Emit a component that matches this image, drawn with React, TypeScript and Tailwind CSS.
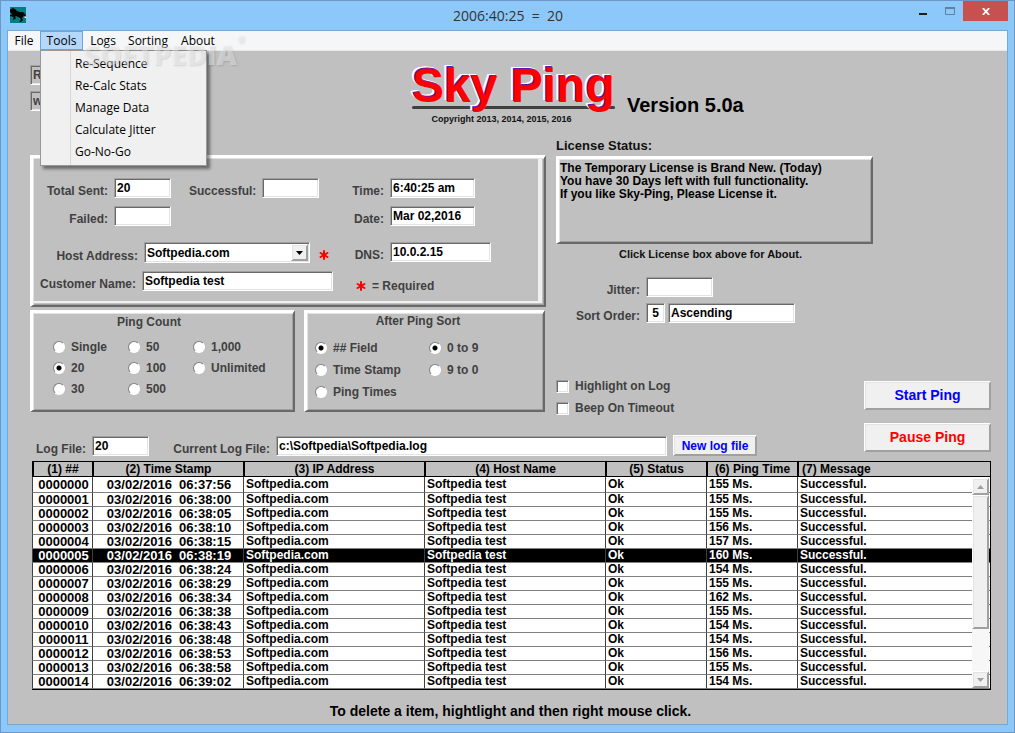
/**
 * Sky Ping main window
 *
 * Title bar, menu bar with the Tools menu open, ping settings and the ping log.
 */

import React from 'react'
import { Asterisk } from 'lucide-react'

interface LogEntry {
  id: string
  time: string
  ping: number
}

const TOOLS_MENU = ['Re-Sequence', 'Re-Calc Stats', 'Manage Data', 'Calculate Jitter', 'Go-No-Go']

const LOG: LogEntry[] = [
  { id: '0000000', time: '06:37:56', ping: 155 },
  { id: '0000001', time: '06:38:00', ping: 155 },
  { id: '0000002', time: '06:38:05', ping: 155 },
  { id: '0000003', time: '06:38:10', ping: 156 },
  { id: '0000004', time: '06:38:15', ping: 157 },
  { id: '0000005', time: '06:38:19', ping: 160 },
  { id: '0000006', time: '06:38:24', ping: 154 },
  { id: '0000007', time: '06:38:29', ping: 155 },
  { id: '0000008', time: '06:38:34', ping: 162 },
  { id: '0000009', time: '06:38:38', ping: 155 },
  { id: '0000010', time: '06:38:43', ping: 154 },
  { id: '0000011', time: '06:38:48', ping: 154 },
  { id: '0000012', time: '06:38:53', ping: 156 },
  { id: '0000013', time: '06:38:58', ping: 155 },
  { id: '0000014', time: '06:39:02', ping: 154 },
]

const SELECTED_ID = '0000005'

const SUNKEN =
  'border border-t-[#a0a0a0] border-l-[#a0a0a0] border-r-white border-b-white shadow-[inset_1px_1px_0_#696969,inset_-1px_-1px_0_#e3e3e3]'
const RAISED =
  'border border-t-white border-l-white border-r-[#a0a0a0] border-b-[#a0a0a0] shadow-[inset_1px_1px_0_#e3e3e3,inset_-1px_-1px_0_#a0a0a0] bg-[#f0f0f0]'
const PANEL =
  'border-t-[3px] border-l-[3px] border-r-2 border-b-2 border-t-white border-l-white border-r-[#696969] border-b-[#696969]'
const PANEL_EDGE = 'shadow-[inset_1px_1px_0_#e3e3e3,inset_-1px_-1px_0_#a0a0a0]'

interface FieldProps {
  id: string
  label: string
  value?: string
  labelClass?: string
  inputClass: string
}

const Field: React.FC<FieldProps> = ({ id, label, value = '', labelClass = '', inputClass }) => (
  <div className="flex items-end gap-1.5">
    <label htmlFor={id} className={`flex justify-end leading-[14px] whitespace-nowrap text-[#404040] ${labelClass}`}>
      {label}
    </label>
    <input id={id} defaultValue={value} className={`h-5 bg-white px-0.5 text-black ${SUNKEN} ${inputClass}`} />
  </div>
)

interface RadioProps {
  name: string
  label: string
  checked?: boolean
}

const Radio: React.FC<RadioProps> = ({ name, label, checked }) => (
  <label className="flex items-center gap-1.5 leading-4 text-[#404040]">
    <input
      type="radio"
      name={name}
      defaultChecked={checked}
      className="h-3 w-3 shrink-0 appearance-none rounded-full border border-t-[#808080] border-l-[#808080] border-r-white border-b-white bg-white checked:bg-[radial-gradient(circle,#000_2px,#fff_3px)]"
    />
    {label}
  </label>
)

const CheckBox: React.FC<{ label: string }> = ({ label }) => (
  <label className="flex h-3.5 items-center gap-1.5 text-[#404040]">
    <input type="checkbox" className={`h-[13px] w-[13px] appearance-none bg-white ${SUNKEN}`} />
    {label}
  </label>
)

const HorseIcon = () => (
  <svg viewBox="0 0 16 16" className="h-4 w-4">
    <rect width="16" height="16" fill="#008080" />
    <path
      d="M1 2l2-1 2 1 2 2 3 1 3 0 2 2 1 2-1 2-1-1-1-2 0 2-1 1 1 2-2 2-2 0 2-2-1-2-2-1-2-1-1 1 1 1-1 1-2 1 0-1 1-1-1-1-2-1-2 1 0 1-1-1 1-2 3 0-1-2-1-1-1 1-1-1z"
      fill="#000"
    />
    <path d="M14 10l1-1 1 1 0 1-1 0z" fill="#fff" />
  </svg>
)

const TitleBar = () => (
  <header className="flex h-[29px] items-start justify-between pr-[6px] pl-[9px]">
    <div className="w-[97px] pt-1.5">
      <HorseIcon />
    </div>
    <h1 className="pt-1 font-['Open_Sans',sans-serif] text-[14px] leading-[22px] font-normal whitespace-pre text-[#333]">
      2006:40:25{'  '}={'  '}20
    </h1>
    <div className="flex">
      <button aria-label="Minimize" className="flex h-[22px] w-7 items-center justify-center">
        <svg viewBox="0 0 8 6" className="h-1.5 w-2">
          <rect y="4" width="8" height="2" fill="#1e1e1e" />
        </svg>
      </button>
      <button aria-label="Maximize" className="flex h-5 w-[26px] items-center justify-center">
        <svg viewBox="0 0 10 8" className="h-2 w-2.5">
          <path d="M.5 1h9v6.500h-9z" fill="none" stroke="#5f819f" />
          <path d="M0 0h10v2H0z" fill="#5f819f" />
        </svg>
      </button>
      <button aria-label="Close" className="flex h-5 w-[45px] items-center justify-center bg-[#c75050]">
        <svg viewBox="0 0 8 7" className="h-[7px] w-2">
          <path d="M.8 0l6.400 7M7.200 0L.8 7" stroke="#fff" strokeWidth="1.800" />
        </svg>
      </button>
    </div>
  </header>
)

const MenuBar = () => (
  <nav className="relative flex h-5 border-b border-[#e8e8e8] bg-[#f5f6f7] font-['Open_Sans',sans-serif] text-[12px] leading-[18px] font-normal text-black">
    <button className="w-8">File</button>
    <div className="relative">
      <button className="h-[19px] w-[43px] border border-[#6aa5e0] bg-[#b5d7f9] leading-[17px]">Tools</button>
      <ul className="absolute top-[19px] left-0 z-10 w-[167px] border border-[#979797] bg-[#f0f0f0] bg-[linear-gradient(90deg,transparent_29px,#d7d7d7_29px,#d7d7d7_30px,transparent_30px)] bg-no-repeat py-[2px] shadow-[3px_3px_3px_rgba(0,0,0,0.45)]">
        {TOOLS_MENU.map((item) => (
          <li key={item}>
            <button className="block h-[22px] w-full pl-[34px] text-left">{item}</button>
          </li>
        ))}
      </ul>
    </div>
    <button className="w-10">Logs</button>
    <button className="w-[50px]">Sorting</button>
    <button className="w-[50px]">About</button>
    <span
      aria-hidden="true"
      className="pointer-events-none absolute top-[7px] left-[75px] z-20 font-['Open_Sans',sans-serif] text-[28px] leading-8 font-extrabold text-white/40 [text-shadow:1px_1px_2px_rgba(0,0,0,0.12)]"
    >
      SOFTPEDIA<sup className="align-top text-[10px] leading-3">®</sup>
    </span>
  </nav>
)

const Banner = () => (
  <div className="flex h-[84px]">
    <div className="flex w-[382px] flex-col gap-1.5 pt-3.5">
      <input aria-label="Route" defaultValue="R" className={`h-5 w-40 px-0.5 text-[#404040] ${SUNKEN}`} />
      <input aria-label="Web" defaultValue="w" className={`h-5 w-40 px-0.5 text-[#404040] ${SUNKEN}`} />
    </div>
    <div className="relative w-[203px] pt-2">
      <span className="absolute top-[55px] right-0 left-0 h-[3px] rounded-full bg-[#404040]" />
      <h2 className="relative text-[48px] leading-[54px] font-bold whitespace-nowrap text-[#f00] [text-shadow:-1px_-1px_0_#5b1ab0,-2px_-2px_0_#fff,-3px_-2px_0_#fff]">
        Sky Ping
      </h2>
      <p className="pr-6 text-center text-[9px] leading-3 text-[#111]">Copyright 2013, 2014, 2015, 2016</p>
    </div>
    <p className="pt-[42px] pl-3 text-[20px] leading-6 text-black">Version 5.0a</p>
  </div>
)

const HostPanel = () => (
  <section
    className={`flex h-[152px] pt-5 ${PANEL} shadow-[inset_1px_1px_0_#e3e3e3,inset_-1px_-1px_0_#a0a0a0,inset_-2px_-2px_0_#c0c0c0,inset_-6px_-4px_0_#f0f0f0]`}
  >
    <div className="w-[310px]">
      <div className="flex gap-[18px]">
        <Field id="sent" label="Total Sent:" value="20" labelClass="w-[75px]" inputClass="w-[57px]" />
        <Field id="ok" label="Successful:" inputClass="w-[57px]" />
      </div>
      <div className="mt-2">
        <Field id="failed" label="Failed:" labelClass="w-[75px]" inputClass="w-[57px]" />
      </div>
      <div className="mt-4 flex items-end gap-1.5">
        <label htmlFor="host" className="w-[105px] text-right leading-[14px] text-[#404040]">
          Host Address:
        </label>
        <div className="relative">
          <select id="host" className={`block h-[21px] w-[166px] appearance-none bg-white px-0.5 text-black ${SUNKEN}`}>
            <option>Softpedia.com</option>
          </select>
          <span className={`pointer-events-none absolute top-0.5 right-0.5 flex h-[17px] w-[17px] items-center justify-center ${RAISED}`}>
            <svg viewBox="0 0 7 4" className="h-1 w-[7px]">
              <path d="M0 0h7L3.500 4z" fill="#000" />
            </svg>
          </span>
        </div>
        <Asterisk size={16} strokeWidth={3} color="#f00" />
      </div>
      <div className="mt-2">
        <Field id="customer" label="Customer Name:" value="Softpedia test" labelClass="w-[103px]" inputClass="w-[191px]" />
      </div>
    </div>
    <div>
      <Field id="time" label="Time:" value="6:40:25 am" labelClass="w-[41px]" inputClass="w-[85px]" />
      <div className="mt-2">
        <Field id="date" label="Date:" value="Mar 02,2016" labelClass="w-[41px]" inputClass="w-[85px]" />
      </div>
      <div className="mt-4">
        <Field id="dns" label="DNS:" value="10.0.2.15" labelClass="w-[41px]" inputClass="w-[101px]" />
      </div>
      <div className="mt-[15px] ml-2.5 flex items-center gap-[3px] text-[#404040]">
        <Asterisk size={16} strokeWidth={3} color="#f00" />= Required
      </div>
    </div>
  </section>
)

const OptionPanels = () => (
  <div className="mt-[3px] flex gap-[9px]">
    <fieldset aria-labelledby="count-title" className={`h-[102px] w-[265px] ${PANEL} ${PANEL_EDGE}`}>
      <p id="count-title" className="pt-px pr-7 text-center leading-4 text-[#404040]">
        Ping Count
      </p>
      <div className="grid grid-cols-[75px_65px_1fr] gap-y-[5px] pt-[9px] pl-5">
        <Radio name="count" label="Single" />
        <Radio name="count" label="50" />
        <Radio name="count" label="1,000" />
        <Radio name="count" label="20" checked />
        <Radio name="count" label="100" />
        <Radio name="count" label="Unlimited" />
        <Radio name="count" label="30" />
        <Radio name="count" label="500" />
      </div>
    </fieldset>
    <fieldset aria-labelledby="sort-title" className={`h-[102px] w-[241px] ${PANEL} ${PANEL_EDGE}`}>
      <p id="sort-title" className="pr-3.5 text-center leading-4 text-[#404040]">
        After Ping Sort
      </p>
      <div className="flex pt-[11px] pl-2">
        <div className="flex w-[114px] flex-col gap-1.5">
          <Radio name="field" label="## Field" checked />
          <Radio name="field" label="Time Stamp" />
          <Radio name="field" label="Ping Times" />
        </div>
        <div className="flex flex-col gap-1.5">
          <Radio name="order" label="0 to 9" checked />
          <Radio name="order" label="9 to 0" />
        </div>
      </div>
    </fieldset>
  </div>
)

const LicenseColumn = () => (
  <section className="col-span-2 col-start-2 row-start-1 pt-[3px]">
    <h3 className="text-[13px] leading-4 text-[#111]">License Status:</h3>
    <div className="w-[317px]">
      <button className={`mt-0.5 block h-[88px] w-full px-px text-left ${PANEL} ${PANEL_EDGE}`}>
        <span className="block h-full pt-[3px] leading-[13px] text-black">
          The Temporary License is Brand New. (Today)
          <br />
          You have 30 Days left with full functionality.
          <br />
          If you like Sky-Ping, Please License it.
        </span>
      </button>
      <p className="mt-0.5 pr-2 text-center text-[11px] leading-4 text-[#111]">Click License box above for About.</p>
    </div>
    <div className="mt-[15px] flex flex-col gap-1.5">
      <Field id="jitter" label="Jitter:" labelClass="w-[84px]" inputClass="w-[67px]" />
      <div className="flex gap-[3px]">
        <Field id="order" label="Sort Order:" value="5" labelClass="w-[84px]" inputClass="w-[19px] text-center" />
        <input aria-label="Sort direction" defaultValue="Ascending" className={`h-5 w-[127px] bg-white px-0.5 text-black ${SUNKEN}`} />
      </div>
    </div>
    <div className="mt-14 flex flex-col items-start gap-2">
      <CheckBox label="Highlight on Log" />
      <CheckBox label="Beep On Timeout" />
    </div>
  </section>
)

const ScrollBar = () => (
  <div className="absolute top-4 right-px bottom-px flex w-[17px] flex-col bg-[#f7f7f7]">
    <button aria-label="Scroll up" className={`flex h-[17px] items-center justify-center ${RAISED}`}>
      <svg viewBox="0 0 7 4" className="h-1 w-[7px]">
        <path d="M0 4h7L3.500 0z" fill="#a0a0a0" />
      </svg>
    </button>
    <div className={`h-[134px] ${RAISED}`} />
    <button aria-label="Scroll down" className={`mt-auto flex h-[17px] items-center justify-center ${RAISED}`}>
      <svg viewBox="0 0 7 4" className="h-1 w-[7px]">
        <path d="M0 0h7L3.500 4z" fill="#a0a0a0" />
      </svg>
    </button>
  </div>
)

const HEAD = 'h-[15px] border-l-2 border-b border-black p-0 font-bold whitespace-nowrap'
const CELL = 'h-3.5 border-b border-l border-b-[#808080] border-l-[#404040] p-0 pl-0.5'

const LogTable = () => (
  <div className="relative mt-[5px] ml-0.5 border border-l-0 border-black">
    <table className="w-full table-fixed border-separate border-spacing-0 leading-[13px] text-black">
      <colgroup>
        <col className="w-[60px]" />
        <col className="w-[151px]" />
        <col className="w-[181px]" />
        <col className="w-[181px]" />
        <col className="w-[101px]" />
        <col className="w-[91px]" />
        <col />
      </colgroup>
      <thead>
        <tr>
          <th className={HEAD}>(1) ##</th>
          <th className={HEAD}>(2) Time Stamp</th>
          <th className={HEAD}>(3) IP Address</th>
          <th className={HEAD}>(4) Host Name</th>
          <th className={HEAD}>(5) Status</th>
          <th className={HEAD}>(6) Ping Time</th>
          <th className={`${HEAD} pl-[3px] text-left`}>(7) Message</th>
        </tr>
      </thead>
      <tbody>
        {LOG.map((entry) => (
          <tr
            key={entry.id}
            className={entry.id === SELECTED_ID ? 'bg-black text-white' : 'bg-white first:h-4'}
          >
            <td className={`${CELL} text-center text-[13px]`}>{entry.id}</td>
            <td className={`${CELL} text-center text-[13px] whitespace-pre`}>{`03/02/2016  ${entry.time}`}</td>
            <td className={CELL}>Softpedia.com</td>
            <td className={CELL}>Softpedia test</td>
            <td className={CELL}>Ok</td>
            <td className={CELL}>{entry.ping} Ms.</td>
            <td className={CELL}>Successful.</td>
          </tr>
        ))}
      </tbody>
    </table>
    <ScrollBar />
  </div>
)

export default function App() {
  return (
    <div className="flex min-h-screen flex-col border border-[#6b98c4] bg-[#8cc8fa] font-['Liberation_Sans',sans-serif] text-[12px] font-bold">
      <TitleBar />
      <div className="mx-1.5 mb-[7px] flex flex-1 flex-col border border-[#78a8d4] bg-[#c0c0c0]">
        <MenuBar />
        <main className="flex-1 pr-4 pl-[22px]">
          <Banner />
          <div className="grid grid-cols-[516px_1fr_127px] gap-x-2.5">
            <div className="pt-5">
              <HostPanel />
              <OptionPanels />
            </div>
            <LicenseColumn />
            <div className="col-span-2 row-start-2 flex items-end pt-5 pl-[5px]">
              <Field id="logno" label="Log File:" value="20" labelClass="w-[51px]" inputClass="w-[57px]" />
              <div className="ml-[27px]">
                <Field
                  id="logpath"
                  label="Current Log File:"
                  value="c:\Softpedia\Softpedia.log"
                  labelClass="w-[94px]"
                  inputClass="w-[391px]"
                />
              </div>
              <button className={`ml-1.5 h-[21px] w-[84px] text-[#00f] ${RAISED}`}>New log file</button>
            </div>
            <div className="col-start-3 row-span-2 row-start-1 flex flex-col justify-end gap-[13px] pb-1 text-[14px]">
              <button className={`h-[29px] text-[#00f] ${RAISED}`}>Start Ping</button>
              <button className={`h-[29px] text-[#f00] ${RAISED}`}>Pause Ping</button>
            </div>
          </div>
          <LogTable />
          <p className="pt-[11px] text-center text-[14px] leading-5 text-black">
            To delete a item, hightlight and then right mouse click.
          </p>
        </main>
      </div>
    </div>
  )
}
